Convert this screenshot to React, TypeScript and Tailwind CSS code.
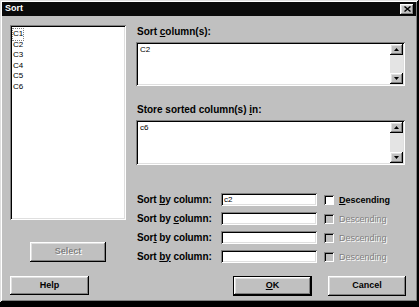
const raised =
  "bg-[#c0c0c0] shadow-[inset_-1px_-1px_0_#000,inset_1px_1px_0_#fff,inset_-2px_-2px_0_#808080,inset_2px_2px_0_#dfdfdf]";
const sunken =
  "bg-white shadow-[inset_1px_1px_0_#808080,inset_-1px_-1px_0_#fff,inset_2px_2px_0_#000,inset_-2px_-2px_0_#dfdfdf]";

function Arrow({ up }: { up?: boolean }) {
  return (
    <div className={`flex h-[11px] w-[13px] items-center justify-center ${raised}`}>
      <svg width="5" height="3" viewBox="0 0 5 3">
        {up ? <path d="M2.5 0 L5 3 L0 3 Z" fill="#000" /> : <path d="M0 0 L5 0 L2.5 3 Z" fill="#000" />}
      </svg>
    </div>
  );
}

function MultiBox({ value, height }: { value: string; height: string }) {
  return (
    <div className={`flex ${height} w-[269px] p-[2px] ${sunken}`}>
      <div className="flex-1 pl-[2px] pt-[1px] text-[8px] leading-[10px] text-black">{value}</div>
      <div className="flex w-[13px] flex-col justify-between bg-[#e4e4e4]">
        <Arrow up />
        <Arrow />
      </div>
    </div>
  );
}

function SortRow({ label, value, enabled }: { label: React.ReactNode; value?: string; enabled?: boolean }) {
  return (
    <div className="flex h-[13px] items-center">
      <div className="w-[84px] text-[10px] font-bold leading-[10px] tracking-[-0.1px]">{label}</div>
      <div className={`h-[13px] w-[96px] pl-[3px] text-[8px] leading-[13px] text-black ${sunken}`}>{value}</div>
      <div
        className={`ml-[7px] h-[10px] w-[10px] ${
          enabled
            ? "bg-white shadow-[inset_1px_1px_0_#808080,inset_-1px_-1px_0_#fff,inset_2px_2px_0_#000]"
            : "bg-[#c0c0c0] shadow-[inset_1px_1px_0_#808080,inset_-1px_-1px_0_#fff,inset_2px_2px_0_#000]"
        }`}
      />
      {enabled ? (
        <span className="ml-[5px] text-[9px] font-bold leading-[10px]">
          <u>D</u>escending
        </span>
      ) : (
        <span className="ml-[5px] text-[9px] leading-[10px] text-[#808080] [text-shadow:1px_1px_0_#fff]">
          Descending
        </span>
      )}
    </div>
  );
}

export default function App() {
  return (
    <div className="h-[307px] w-[419px] bg-black text-black" style={{ fontFamily: '"Liberation Sans", Arial, sans-serif' }}>
      <div className="flex h-[302px] w-[418px] flex-col bg-[#c0c0c0] p-[2px] shadow-[inset_1px_1px_0_#dfdfdf,inset_-1px_-1px_0_#000,inset_2px_2px_0_#fff,inset_-2px_-2px_0_#808080]">
        <div className="flex h-[14px] items-center justify-between bg-[#0a0a0a] pl-[3px] pr-[2px]">
          <span className="text-[9px] font-bold text-white">Sort</span>
          <div className={`flex h-[11px] w-[14px] items-center justify-center ${raised}`}>
            <svg width="7" height="6" viewBox="0 0 7 6">
              <path d="M0.5 0.5 L6.5 5.5 M6.5 0.5 L0.5 5.5" stroke="#000" strokeWidth="1.4" />
            </svg>
          </div>
        </div>

        <div className="flex pl-[8px]">
          <div className="flex w-[116px] flex-col">
            <div className={`mt-[9px] h-[195px] px-[3px] pt-[4px] text-[8px] leading-[10.5px] text-black ${sunken}`}>
              {["C1", "C2", "C3", "C4", "C5", "C6"].map((c, i) => (
                <div key={c} className={i === 0 ? "w-fit outline-1 outline-dotted outline-[#808080]" : ""}>
                  {c}
                </div>
              ))}
            </div>
            <div className={`ml-[20px] mt-[22px] flex h-[20px] w-[76px] items-center justify-center text-[9px] font-bold text-[#808080] [text-shadow:1px_1px_0_#fff] ${raised}`}>
              Select
            </div>
          </div>

          <div className="ml-[10px] flex flex-col">
            <div className="mt-[11px] h-[10px] pl-[1px] text-[10px] font-bold leading-[10px]">
              Sort <u>c</u>olumn(s):
            </div>
            <div className="mt-[5px]">
              <MultiBox value="C2" height="h-[44px]" />
            </div>
            <div className="mt-[19px] h-[10px] pl-[1px] text-[10px] font-bold leading-[10px]">
              Store sorted column(s) <u>i</u>n:
            </div>
            <div className="mt-[5px]">
              <MultiBox value="c6" height="h-[45px]" />
            </div>
            <div className="mt-[28px] flex flex-col gap-[6px] pl-[1px]">
              <SortRow label={<>Sort <u>b</u>y column:</>} value="c2" enabled />
              <SortRow label={<>Sort by <u>c</u>olumn:</>} />
              <SortRow label={<>Sor<u>t</u> by column:</>} />
              <SortRow label={<>Sort <u>by</u> column:</>} />
            </div>
          </div>
        </div>

        <div className="mt-[13px] flex pl-[8px]">
          <div className={`flex h-[19px] w-[79px] items-center justify-center text-[9px] font-bold ${raised}`}>Help</div>
          <div className="ml-[144px] flex h-[20px] w-[79px] items-center justify-center border border-black text-[9px] font-bold">
            <div className={`flex h-full w-full items-center justify-center ${raised}`}>
              <span>
                <u>O</u>K
              </span>
            </div>
          </div>
          <div className={`ml-[16px] flex h-[20px] w-[78px] items-center justify-center text-[9px] font-bold ${raised}`}>
            Cancel
          </div>
        </div>
      </div>
    </div>
  );
}
